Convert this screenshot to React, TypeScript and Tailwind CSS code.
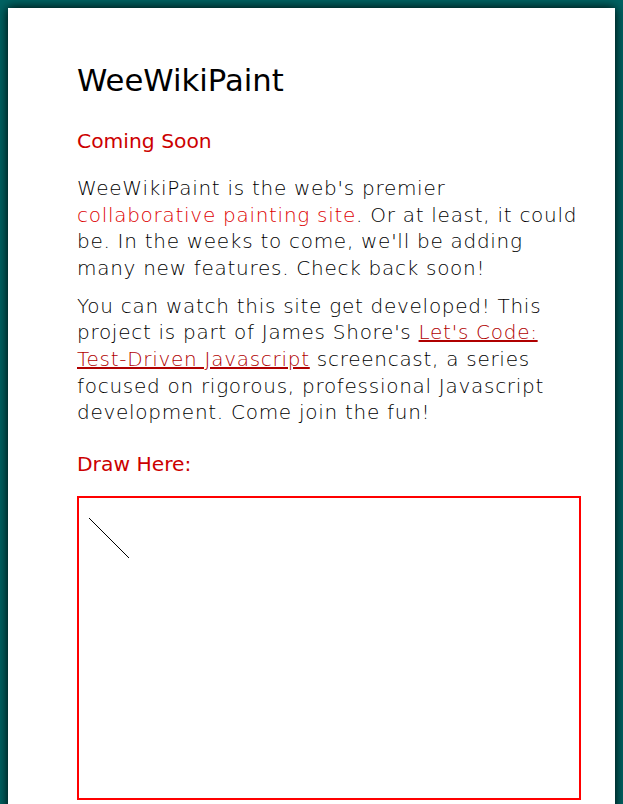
import React from "react";

export default function App() {
  return (
    <div className="min-h-screen bg-[#006262] px-2 pt-2" style={{ fontFamily: '"DejaVu Sans", "Liberation Sans", sans-serif' }}>
      <div className="min-h-[900px] bg-white pl-[69px] pt-[55px] shadow-[0_0_10px_#000]">
        <h1 className="text-[30.7px] leading-[36px] text-black">WeeWikiPaint</h1>
        <h2 className="mt-[30px] text-[20.3px] leading-[24px] text-[#cc0000]">Coming Soon</h2>
        <div
          className="w-[506px] text-[20px] font-extralight leading-[26.67px] tracking-[0.72px] text-[#000]"
          style={{ fontFamily: '"DejaVu Sans Light", "DejaVu Sans", sans-serif' }}
        >
          <p className="mt-[22px]">
            WeeWikiPaint is the web's premier{" "}
            <span className="text-[#dd0000]">collaborative painting site</span>. Or at least, it could be. In the weeks to
            come, we'll be adding many new features. Check back soon!
          </p>
          <p className="mt-[11px]">
            You can watch this site get developed! This project is part of James Shore's{" "}
            <a className="text-[#b00000] underline" href="#">
              Let's Code: Test-Driven Javascript
            </a>{" "}
            screencast, a series focused on rigorous, professional Javascript development. Come join the fun!
          </p>
        </div>
        <h2 className="mt-[26px] text-[20.3px] leading-[24px] text-[#cc0000]">Draw Here:</h2>
        <div className="mt-[20px] h-[304px] w-[504px] border-2 border-[#ff0000]">
          <svg width="500" height="300" className="block">
            <line x1="10" y1="20" x2="50" y2="60" stroke="#000" strokeWidth="1" />
          </svg>
        </div>
      </div>
    </div>
  );
}
